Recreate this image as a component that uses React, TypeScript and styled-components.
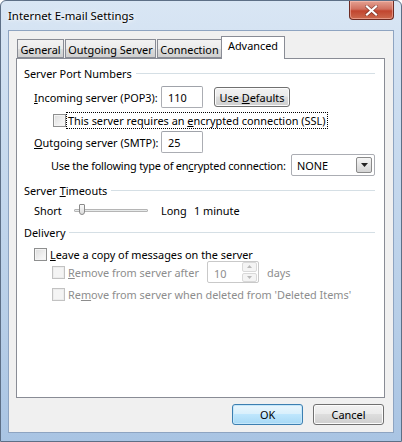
import React from "react";
import styled, { createGlobalStyle } from "styled-components";

const GlobalStyle = createGlobalStyle`
  html, body {
    margin: 0;
    padding: 0;
    background: #ffffff;
  }
  * {
    box-sizing: border-box;
  }
`;

const FONT = `"Noto Sans", "Open Sans", sans-serif`;

export default function App() {
  return (
    <>
      <GlobalStyle />
      <Window>
        <TitleBar>
          <Title>Internet E-mail Settings</Title>
          <CloseButton>
            <svg width="13" height="11" viewBox="0 0 13 11">
              <path
                d="M2 1.5 L11 9.5 M11 1.5 L2 9.5"
                stroke="#3a1414"
                strokeWidth="3.6"
                strokeLinecap="square"
                opacity="0.45"
              />
              <path
                d="M2 1.5 L11 9.5 M11 1.5 L2 9.5"
                stroke="#ffffff"
                strokeWidth="2.2"
                strokeLinecap="square"
              />
            </svg>
          </CloseButton>
        </TitleBar>
        <Client>
          <TabStrip>
            <Tab $w={47}>General</Tab>
            <Tab $w={91}>Outgoing Server</Tab>
            <Tab $w={65}>Connection</Tab>
            <Tab $w={64} $active>
              Advanced
            </Tab>
          </TabStrip>
          <Panel>
            <GroupHeader $mt={7}>
              <span>Server Port Numbers</span>
              <GroupLine />
            </GroupHeader>

            <Row $h={22} $mt={6} $indent={10}>
              <FieldLabel $w={127}>
                <u>I</u>ncoming server (POP3):
              </FieldLabel>
              <TextBox $w={42}>110</TextBox>
              <Button $w={76} $ml={11}>
                <span>
                  Use <u>D</u>efaults
                </span>
              </Button>
            </Row>

            <Row $h={16} $mt={4} $indent={29}>
              <CheckBox />
              <FocusLabel>
                This server requires an <u>e</u>ncrypted connection (SSL)
              </FocusLabel>
            </Row>

            <Row $h={22} $mt={3} $indent={10}>
              <FieldLabel $w={127}>
                <u>O</u>utgoing server (SMTP):
              </FieldLabel>
              <TextBox $w={42}>25</TextBox>
            </Row>

            <Row $h={22} $mt={1} $indent={27}>
              <FieldLabel $w={240} $ls={-0.2}>
                Use the following type of en<u>c</u>rypted connection:
              </FieldLabel>
              <Combo>
                <ComboText>NONE</ComboText>
                <ComboArrow>
                  <svg width="7" height="4" viewBox="0 0 7 4">
                    <path d="M0 0 H7 L3.5 4 Z" fill="#222" />
                  </svg>
                </ComboArrow>
              </Combo>
            </Row>

            <GroupHeader $mt={7}>
              <span>
                Server <u>T</u>imeouts
              </span>
              <GroupLine />
            </GroupHeader>

            <Row $h={20} $mt={3} $indent={10}>
              <FieldLabel $w={40}>Short</FieldLabel>
              <Slider>
                <SliderTrack />
                <SliderThumb />
              </Slider>
              <FieldLabel $w={33}>Long</FieldLabel>
              <FieldLabel>1 minute</FieldLabel>
            </Row>

            <GroupHeader $mt={5}>
              <span>Delivery</span>
              <GroupLine />
            </GroupHeader>

            <Row $h={16} $mt={7} $indent={10}>
              <CheckBox />
              <CheckLabel>
                <u>L</u>eave a copy of messages on the server
              </CheckLabel>
            </Row>

            <Row $h={22} $mt={-1} $indent={28}>
              <CheckBox $disabled />
              <CheckLabel $disabled $w={139}>
                <u>R</u>emove from server after
              </CheckLabel>
              <Spinner>
                <SpinText>10</SpinText>
                <SpinButtons>
                  <SpinBtn>
                    <svg width="5" height="3" viewBox="0 0 5 3">
                      <path d="M0 3 L2.5 0 L5 3 Z" fill="#b9b9b9" />
                    </svg>
                  </SpinBtn>
                  <SpinBtn>
                    <svg width="5" height="3" viewBox="0 0 5 3">
                      <path d="M0 0 H5 L2.5 3 Z" fill="#b9b9b9" />
                    </svg>
                  </SpinBtn>
                </SpinButtons>
              </Spinner>
              <CheckLabel $disabled $ml={8}>
                days
              </CheckLabel>
            </Row>

            <Row $h={16} $mt={3} $indent={28}>
              <CheckBox $disabled />
              <CheckLabel $disabled>
                Re<u>m</u>ove from server when deleted from 'Deleted Items'
              </CheckLabel>
            </Row>
          </Panel>
          <Footer>
            <Button $w={71} $h={21} $default>
              OK
            </Button>
            <Button $w={71} $h={21} $ml={10}>
              Cancel
            </Button>
          </Footer>
        </Client>
      </Window>
    </>
  );
}

const Window = styled.div`
  width: 402px;
  height: 442px;
  display: flex;
  flex-direction: column;
  padding: 0 7px 8px 7px;
  background: linear-gradient(
    180deg,
    #d9e6f4 0%,
    #c9dbef 30%,
    #b8cfe8 70%,
    #a9c4e3 100%
  );
  border: 1px solid #5d6f86;
  border-radius: 6px 6px 0 0;
  font-family: ${FONT};
  font-size: 10.9px;
  color: #000;
  overflow: hidden;
`;

const TitleBar = styled.div`
  height: 29px;
  display: flex;
  align-items: flex-start;
  justify-content: space-between;
  flex-shrink: 0;
`;

const Title = styled.div`
  padding-top: 7px;
  font-size: 11.4px;
  color: #000;
  text-shadow: 0 0 6px #ffffff, 0 0 3px #ffffff;
`;

const CloseButton = styled.div`
  width: 45px;
  height: 19px;
  display: flex;
  align-items: center;
  justify-content: center;
  background: linear-gradient(180deg, #e4a192 0%, #d0705f 45%, #c1452f 55%, #cc6a4e 100%);
  border: 1px solid #6d2b22;
  border-top: none;
  border-radius: 0 0 4px 4px;
  box-shadow: inset 0 0 0 1px rgba(255, 200, 190, 0.5);
`;

const Client = styled.div`
  flex: 1;
  display: flex;
  flex-direction: column;
  background: #f0f0f0;
  border: 1px solid #8ea4c1;
  padding: 5px 8px 0 7px;
`;

const TabStrip = styled.div`
  display: flex;
  align-items: flex-end;
  height: 22px;
  padding-left: 1px;
  position: relative;
  z-index: 1;
`;

const Tab = styled.div<{ $w: number; $active?: boolean }>`
  width: ${({ $w }) => $w}px;
  height: ${({ $active }) => ($active ? "23px" : "19px")};
  margin-bottom: ${({ $active }) => ($active ? "-1px" : "0")};
  margin-left: ${({ $active }) => ($active ? "-1px" : "1px")};
  padding-top: 1px;
  display: flex;
  justify-content: center;
  align-items: ${({ $active }) => ($active ? "flex-start" : "center")};
  border: 1px solid #898c95;
  border-bottom: ${({ $active }) => ($active ? "none" : "1px solid #898c95")};
  background: ${({ $active }) =>
    $active
      ? "#ffffff"
      : "linear-gradient(180deg, #f2f2f2 0%, #ebebeb 50%, #dddddd 51%, #cfcfcf 100%)"};
  white-space: nowrap;
  &:first-child {
    margin-left: 0;
  }
`;

const Panel = styled.div`
  height: 340px;
  background: #ffffff;
  border: 1px solid #898c95;
  padding: 0 9px 0 7px;
  display: flex;
  flex-direction: column;
`;

const GroupHeader = styled.div<{ $mt: number }>`
  height: 14px;
  margin-top: ${({ $mt }) => $mt}px;
  display: flex;
  align-items: center;
  gap: 4px;
  white-space: nowrap;
`;

const GroupLine = styled.div`
  flex: 1;
  height: 1px;
  background: #d5dfe5;
  margin-top: 1px;
`;

const Row = styled.div<{ $h: number; $mt: number; $indent: number }>`
  height: ${({ $h }) => $h}px;
  margin-top: ${({ $mt }) => $mt}px;
  padding-left: ${({ $indent }) => $indent}px;
  display: flex;
  align-items: center;
  white-space: nowrap;
`;

const FieldLabel = styled.div<{ $w?: number; $ls?: number }>`
  width: ${({ $w }) => ($w ? `${$w}px` : "auto")};
  letter-spacing: ${({ $ls }) => $ls ?? 0}px;
  flex-shrink: 0;
`;

const TextBox = styled.div<{ $w: number }>`
  width: ${({ $w }) => $w}px;
  height: 22px;
  border: 1px solid #abadb3;
  border-top-color: #a0a3aa;
  border-radius: 2px;
  padding: 1px 0 0 6px;
  background: #fff;
  display: flex;
  align-items: center;
`;

const Button = styled.div<{ $w: number; $h?: number; $ml?: number; $default?: boolean }>`
  width: ${({ $w }) => $w}px;
  height: ${({ $h }) => $h ?? 20}px;
  margin-left: ${({ $ml }) => $ml ?? 0}px;
  display: flex;
  align-items: center;
  justify-content: center;
  border: 1px solid ${({ $default }) => ($default ? "#3c7fb1" : "#707070")};
  border-radius: 3px;
  background: ${({ $default }) =>
    $default
      ? "linear-gradient(180deg, #eaf6fd 0%, #d9f0fc 45%, #bee6fd 50%, #a7d9f5 100%)"
      : "linear-gradient(180deg, #f2f2f2 0%, #ebebeb 45%, #dddddd 50%, #cfcfcf 100%)"};
  box-shadow: inset 0 0 0 1px ${({ $default }) => ($default ? "#c5e7fa" : "#fcfcfc")};
`;

const CheckBox = styled.div<{ $disabled?: boolean }>`
  width: 13px;
  height: 13px;
  flex-shrink: 0;
  border: 1px solid ${({ $disabled }) => ($disabled ? "#c2c2c2" : "#8e8f8f")};
  background: ${({ $disabled }) =>
    $disabled
      ? "#f4f4f4"
      : "linear-gradient(135deg, #dcdcdc 0%, #f0f0f0 60%, #fafafa 100%)"};
  box-shadow: inset 0 0 0 1px ${({ $disabled }) => ($disabled ? "#ececec" : "#f4f4f4")};
`;

const CheckLabel = styled.div<{ $disabled?: boolean; $w?: number; $ml?: number }>`
  margin-left: ${({ $ml }) => $ml ?? 3}px;
  width: ${({ $w }) => ($w ? `${$w}px` : "auto")};
  flex-shrink: 0;
  color: ${({ $disabled }) => ($disabled ? "#8d8d8d" : "#000")};
`;

const FocusLabel = styled.div`
  margin-left: 1px;
  padding: 0 1px;
  outline: 1px dotted #000;
  line-height: 15px;
`;

const Combo = styled.div`
  width: 87px;
  height: 22px;
  border: 1px solid #abadb3;
  border-radius: 2px;
  background: #fff;
  display: flex;
  align-items: center;
  padding: 0 2px 0 5px;
`;

const ComboText = styled.div`
  flex: 1;
`;

const ComboArrow = styled.div`
  width: 16px;
  height: 16px;
  border: 1px solid #8a8a8a;
  border-radius: 2px;
  background: linear-gradient(180deg, #f6f6f6 0%, #e4e4e4 50%, #d4d4d4 100%);
  display: flex;
  align-items: center;
  justify-content: center;
`;

const Slider = styled.div`
  position: relative;
  width: 74px;
  height: 20px;
  margin-right: 13px;
`;

const SliderTrack = styled.div`
  position: absolute;
  left: 0;
  right: 0;
  top: 9px;
  height: 3px;
  border: 1px solid #b5b5b5;
  border-radius: 1px;
  background: #e7eaea;
`;

const SliderThumb = styled.div`
  position: absolute;
  left: 5px;
  top: 4px;
  width: 6px;
  height: 11px;
  border: 1px solid #8a8a8a;
  border-radius: 1px 1px 3px 3px;
  background: linear-gradient(180deg, #fafafa 0%, #dcdcdc 100%);
`;

const Spinner = styled.div`
  width: 52px;
  height: 22px;
  border: 1px solid #c9c9c9;
  border-radius: 2px;
  background: #fff;
  display: flex;
  align-items: center;
  padding-left: 6px;
`;

const SpinText = styled.div`
  flex: 1;
  color: #8d8d8d;
  padding-top: 3px;
`;

const SpinButtons = styled.div`
  width: 15px;
  height: 20px;
  display: flex;
  flex-direction: column;
  gap: 1px;
  margin-right: 1px;
`;

const SpinBtn = styled.div`
  flex: 1;
  border: 1px solid #d9d9d9;
  border-radius: 2px;
  background: #f4f4f4;
  display: flex;
  align-items: center;
  justify-content: center;
`;

const Footer = styled.div`
  flex: 1;
  display: flex;
  align-items: flex-start;
  justify-content: flex-end;
  padding-top: 6px;
  padding-right: 1px;
`;
